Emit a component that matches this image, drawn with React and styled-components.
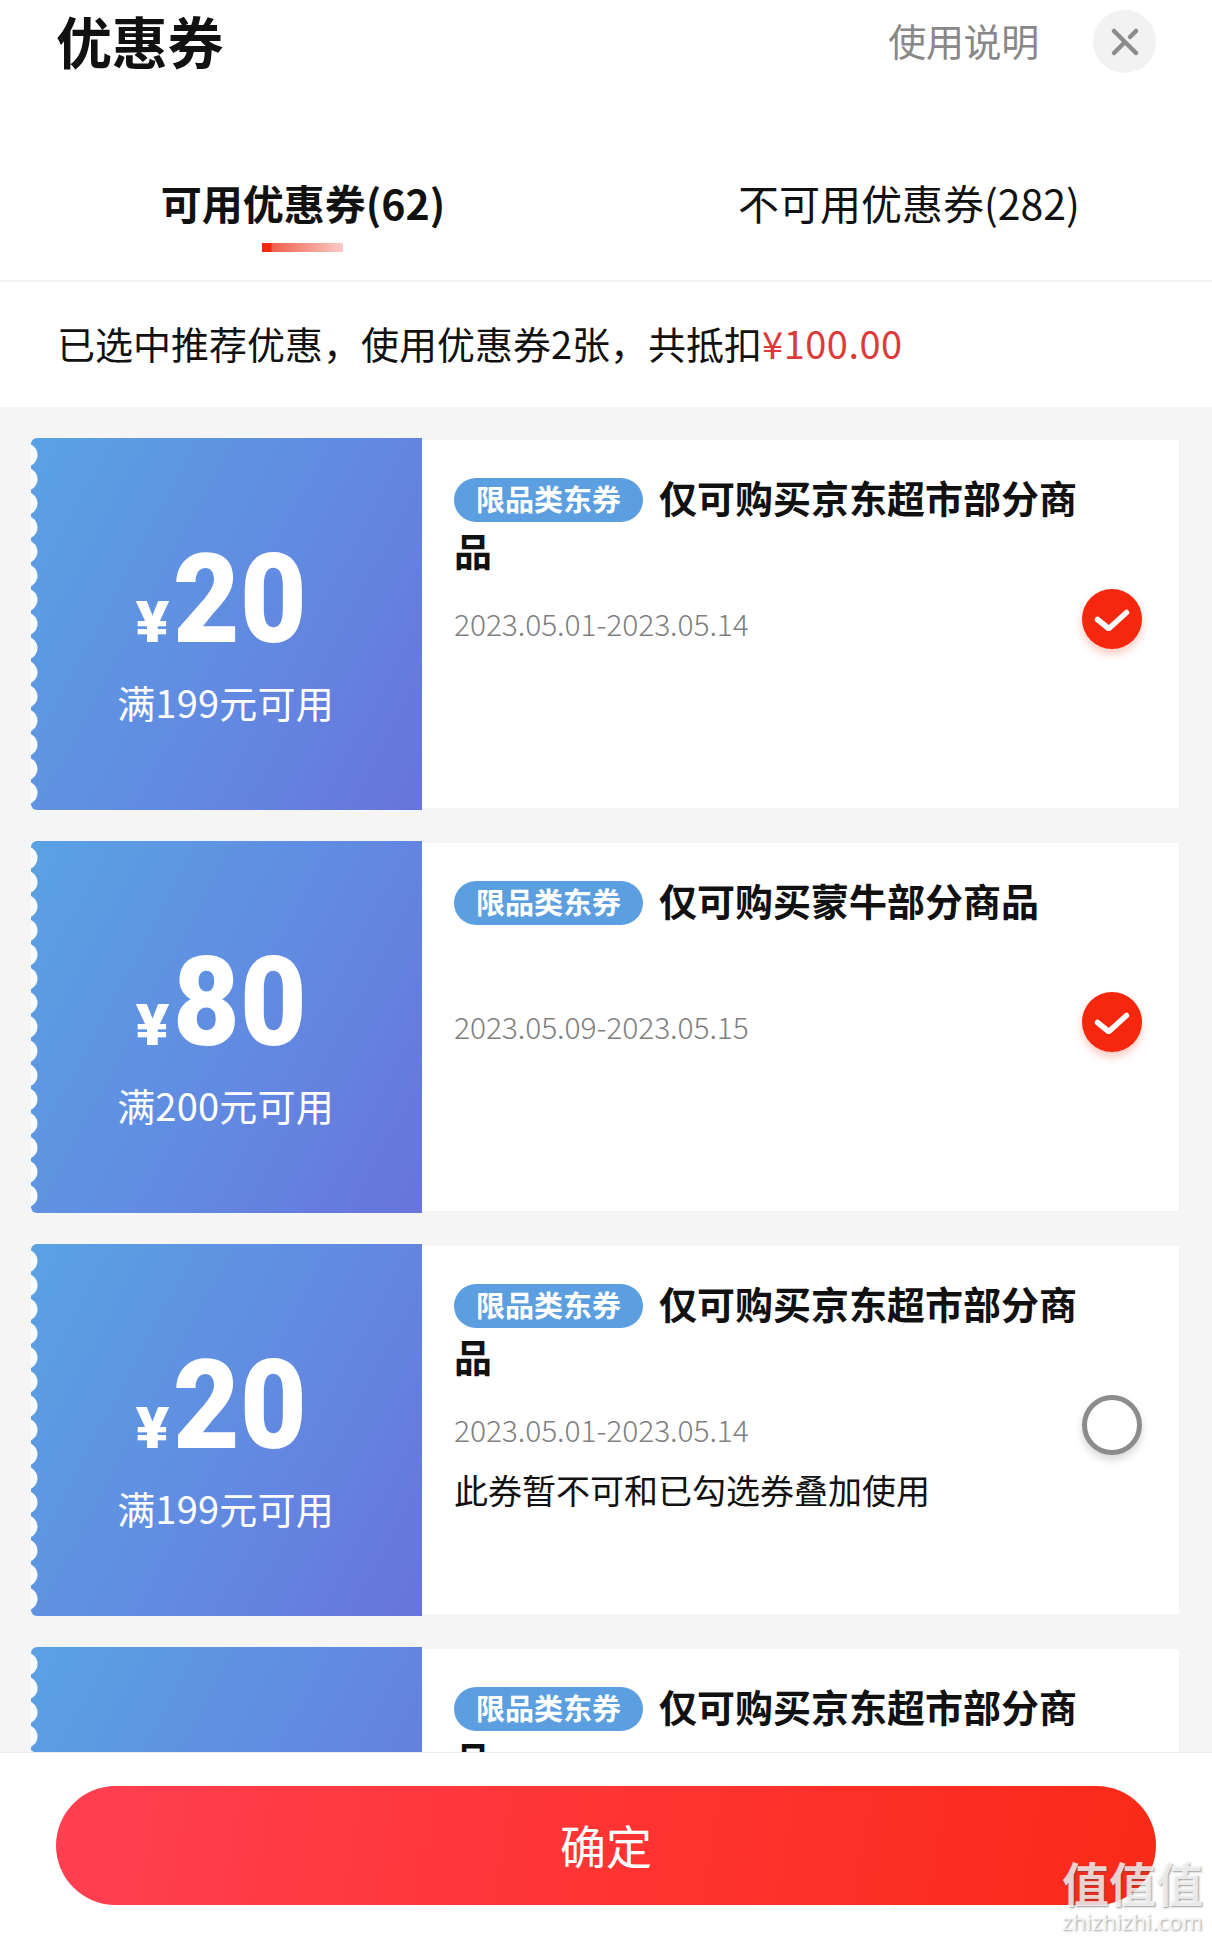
import React from 'react'
import styled, {createGlobalStyle} from 'styled-components'

const GlobalStyle = createGlobalStyle`
* {
  box-sizing: border-box;
}
body {
  margin: 0;
  background: #fff;
  color: #111;
  font-family: 'Noto Sans CJK SC', sans-serif;
}
`
const Sheet = styled.div`
width: 1212px;
height: 1940px;
display: flex;
flex-direction: column;
position: relative;
overflow: hidden;
background: #fff;
`
const Header = styled.header`
height: 126px;
padding: 10px 56px 0 57px;
display: flex;
align-items: flex-start;
`
const Title = styled.h1`
margin: -2px 0 0 -1px;
flex: 1;
font-size: 56px;
line-height: 64px;
font-weight: 700;
letter-spacing: -0.3px;
`
const Help = styled.span`
margin: -2px 54px 0 0;
font-size: 38px;
line-height: 64px;
letter-spacing: -0.3px;
color: #888;
`
const Close = styled.button`
width: 63px;
height: 63px;
padding: 0;
border: none;
border-radius: 50%;
background: #f2f2f2;
display: flex;
align-items: center;
justify-content: center;
cursor: pointer;
`
const Tabs = styled.nav`
height: 156px;
display: flex;
border-bottom: 2px solid #f4f4f4;
`
const Tab = styled.div`
flex: 1;
padding-top: 46px;
display: flex;
flex-direction: column;
align-items: center;
font-size: 41px;
line-height: 60px;
font-weight: ${({$active}) => ($active ? 700 : 400)};
cursor: pointer;
`
const Underline = styled.div`
width: 81px;
height: 9px;
margin: 11px 2px 0 0;
background: linear-gradient(90deg, #f2270c 0 9px, #f1604c 10px, #facbc7 100%);
`
const Summary = styled.div`
height: 125px;
padding-left: 57px;
font-size: 38px;
line-height: 122px;
`
const Saved = styled.span`
color: #dc3b3b;
letter-spacing: 0.5px;
`
const List = styled.main`
flex: 1;
min-height: 0;
padding: 31px 33px 0 31px;
display: flex;
flex-direction: column;
gap: 31px;
overflow: hidden;
background: #f5f5f5;
`
const Card = styled.article`
height: 372px;
flex-shrink: 0;
display: flex;
`
const Stub = styled.div`
width: 391px;
position: relative;
display: flex;
flex-direction: column;
align-items: center;
color: #fff;
background: linear-gradient(118deg, #5aa2e3 0%, #6289e1 58%, #6874da 100%);
border-radius: 6px 0 0 6px;
overflow: hidden;
`
const Teeth = styled.svg`
position: absolute;
left: 0;
top: 0;
`
const Amount = styled.div`
height: 218px;
padding-top: 100px;
margin-right: 10px;
display: flex;
align-items: baseline;
font-family: Roboto, sans-serif;
font-weight: 900;
`
const Yen = styled.span`
font-size: 57px;
line-height: 60px;
transform: scaleX(1.1);
`
const Value = styled.span`
width: 133px;
margin-left: 6px;
font-size: 125px;
line-height: 124px;
letter-spacing: 0.5px;
white-space: nowrap;
transform: scaleX(0.92);
transform-origin: left;
`
const Condition = styled.div`
font-size: 38px;
line-height: 56px;
margin-top: 18px;
margin-right: 2px;
letter-spacing: 0.2px;
`
const Body = styled.div`
flex: 1;
margin: 2px 0;
padding: 30px 37px 0 32px;
display: flex;
background: #fff;
`
const Info = styled.div`
width: 628px;
`
const Name = styled.h2`
width: 640px;
height: 106px;
margin: 0;
font-size: 38px;
line-height: 53px;
font-weight: 700;
`
const Badge = styled.span`
display: inline-block;
width: 189px;
height: 44px;
margin-right: 16px;
border-radius: 22px;
background: #5c9fe1;
color: #fff;
font-size: 29px;
line-height: 41px;
text-align: center;
vertical-align: 2px;
`
const Dates = styled.div`
margin-top: 25px;
font-size: 30px;
line-height: 44px;
font-weight: 300;
letter-spacing: -0.1px;
color: #808080;
`
const Note = styled.div`
margin-top: 16px;
font-size: 34px;
line-height: 46px;
`
const Radio = styled.div`
width: 60px;
height: 60px;
margin-top: 119px;
border-radius: 50%;
display: flex;
align-items: center;
justify-content: center;
border: ${({$checked}) => ($checked ? 'none' : '5px solid #8c8c8c')};
background: ${({$checked}) => ($checked ? '#f5270d' : '#fff')};
box-shadow: 0 5px 9px ${({$checked}) => ($checked ? 'rgba(245, 39, 13, 0.25)' : 'rgba(0, 0, 0, 0.15)')};
`
const Footer = styled.footer`
height: 188px;
padding: 33px 56px 0;
border-top: 1px solid #ececec;
background: #fff;
`
const Submit = styled.button`
width: 100%;
height: 119px;
padding: 0 0 4px;
border: none;
border-radius: 60px;
background: linear-gradient(100deg, #ff4052 0%, #ff3433 50%, #fa2a18 100%);
color: #fff;
font-family: inherit;
font-size: 46px;
line-height: 60px;
cursor: pointer;
`
const Watermark = styled.div`
position: absolute;
right: 8px;
bottom: 6px;
width: 142px;
color: rgba(255, 255, 255, 0.78);
text-shadow: 1px 1px 2px rgba(70, 70, 70, 0.55);
`
const Mark = styled.div`
font-size: 47px;
line-height: 52px;
font-weight: 700;
`
const Site = styled.div`
font-family: 'Open Sans', sans-serif;
font-size: 22px;
line-height: 26px;
letter-spacing: 0.2px;
`

const coupons = [
  {id: 1, value: 20, limit: 199, name: '仅可购买京东超市部分商品', dates: '2023.05.01-2023.05.14', checked: true},
  {id: 2, value: 80, limit: 200, name: '仅可购买蒙牛部分商品', dates: '2023.05.09-2023.05.15', checked: true},
  {id: 3, value: 20, limit: 199, name: '仅可购买京东超市部分商品', dates: '2023.05.01-2023.05.14', note: '此券暂不可和已勾选券叠加使用'},
  {id: 4, value: 20, limit: 199, name: '仅可购买京东超市部分商品', dates: '2023.05.01-2023.05.14'},
]

function Coupon({coupon}) {
  return (
    <Card>
      <Stub>
        <Teeth width='8' height='372'>
          {Array.from({length: 15}, (_, i) => (
            <circle key={i} cx='-5' cy={17 + i * 24.14} r='11.5' fill='#fafdff'/>
          ))}
        </Teeth>
        <Amount>
          <Yen>¥</Yen>
          <Value>{coupon.value}</Value>
        </Amount>
        <Condition>满{coupon.limit}元可用</Condition>
      </Stub>
      <Body>
        <Info>
          <Name>
            <Badge>限品类东券</Badge>
            {coupon.name}
          </Name>
          <Dates>{coupon.dates}</Dates>
          {coupon.note && <Note>{coupon.note}</Note>}
        </Info>
        <Radio $checked={coupon.checked}>
          {coupon.checked && (
            <svg width='60' height='60' viewBox='0 0 60 60' fill='none' stroke='#fff' strokeWidth='5.5' strokeLinecap='round' strokeLinejoin='round'>
              <path d='M15.500 30.500l10.500 8.500q1 .5 2-.5L44.500 23.500'/>
            </svg>
          )}
        </Radio>
      </Body>
    </Card>
  )
}

function App() {
  return (
    <Sheet>
      <GlobalStyle/>
      <Header>
        <Title>优惠券</Title>
        <Help>使用说明</Help>
        <Close>
          <svg width='30' height='30' viewBox='0 0 30 30' fill='none' stroke='#8c8c8c' strokeWidth='4.5' strokeLinecap='round'>
            <path d='M4 4l22 22M4 26L14 16M20 10l6-6'/>
          </svg>
        </Close>
      </Header>
      <Tabs>
        <Tab $active>
          可用优惠券(62)
          <Underline/>
        </Tab>
        <Tab>不可用优惠券(282)</Tab>
      </Tabs>
      <Summary>
        已选中推荐优惠，使用优惠券2张，共抵扣<Saved>¥100.00</Saved>
      </Summary>
      <List>
        {coupons.map((coupon) => (
          <Coupon key={coupon.id} coupon={coupon}/>
        ))}
      </List>
      <Footer>
        <Submit>确定</Submit>
      </Footer>
      <Watermark>
        <Mark>值值值</Mark>
        <Site>zhizhizhi.com</Site>
      </Watermark>
    </Sheet>
  )
}

export default App
